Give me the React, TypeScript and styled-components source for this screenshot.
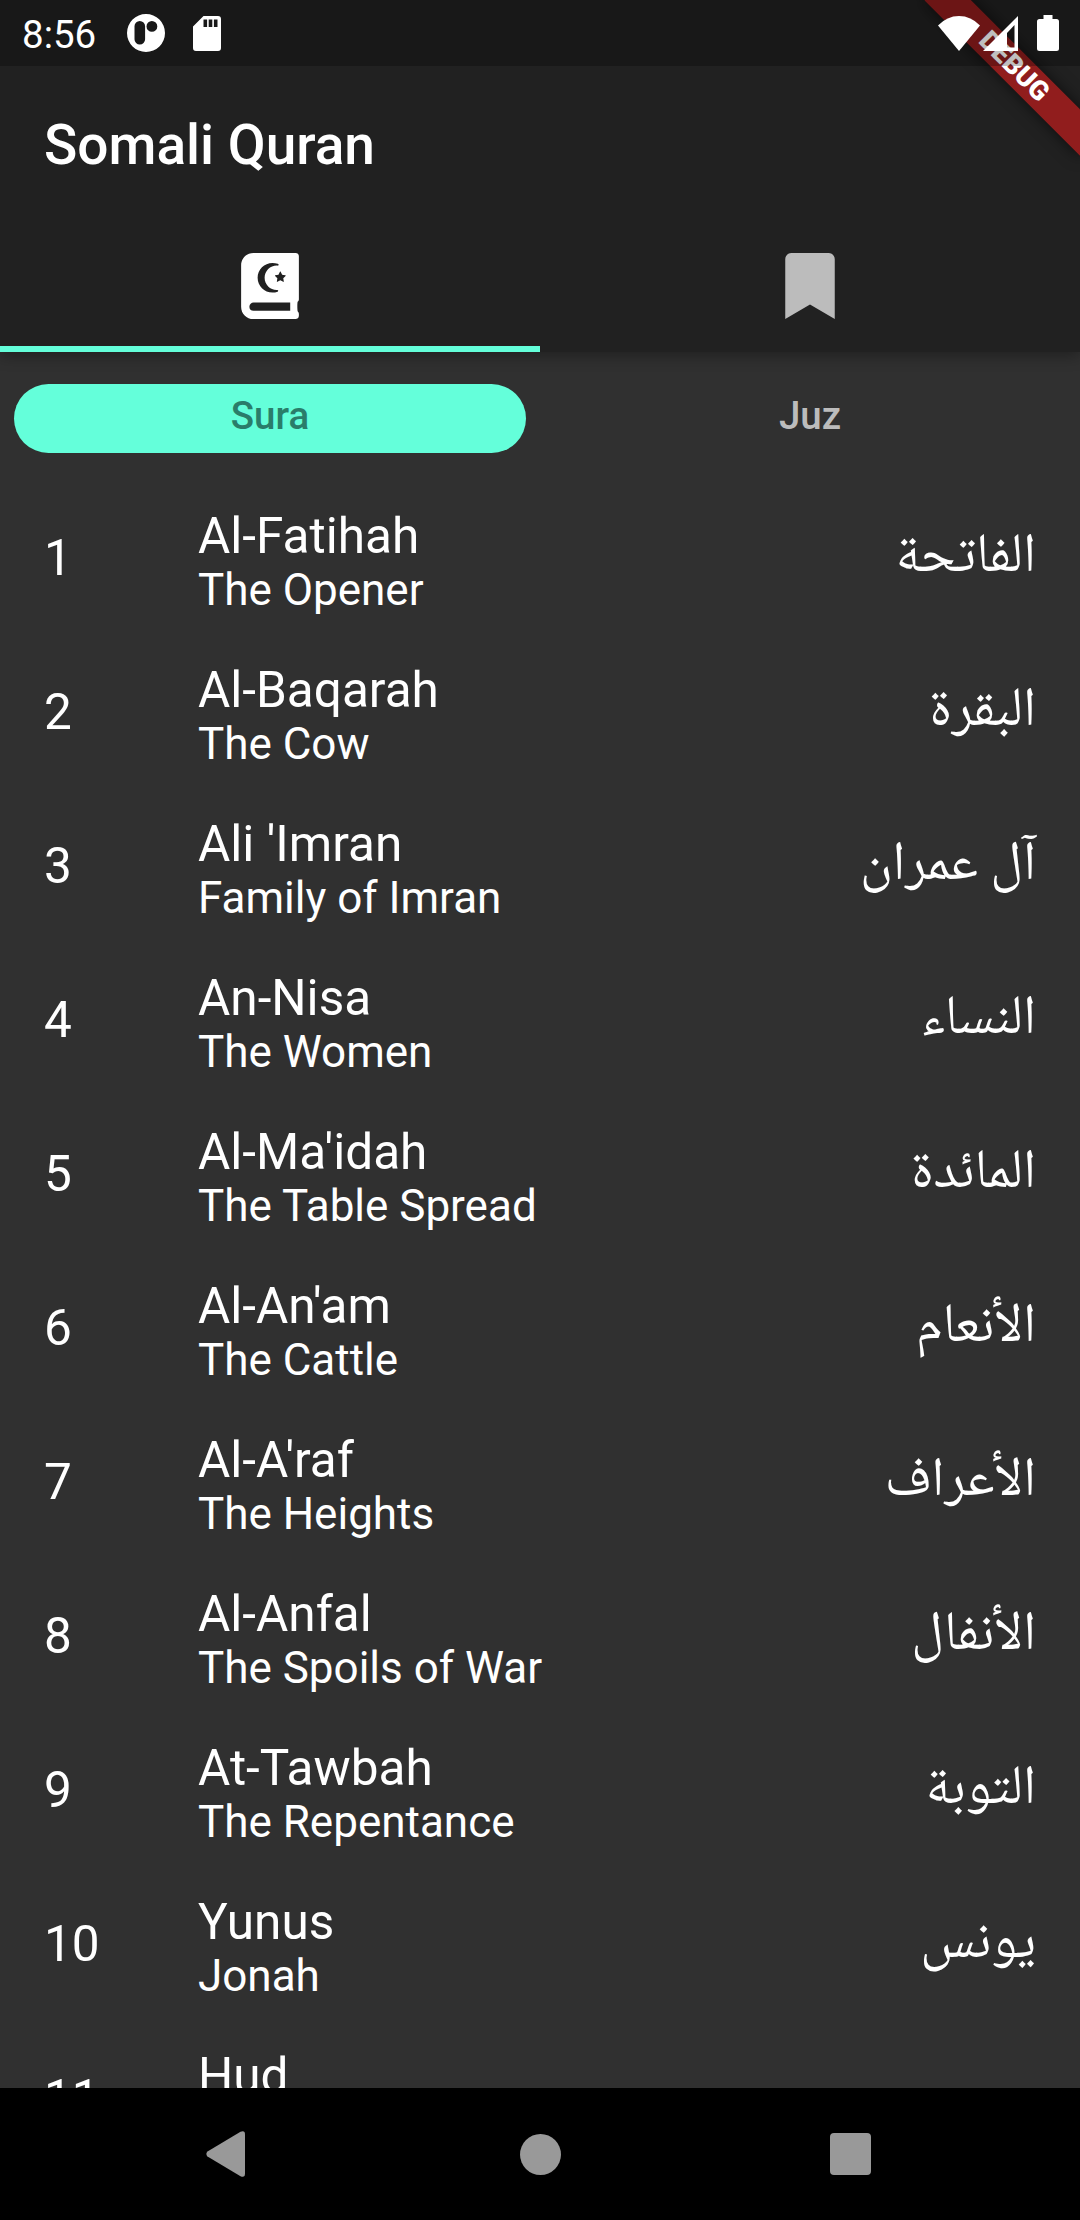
import React from 'react';
import styled, { createGlobalStyle } from 'styled-components';
import { FaBookmark, FaQuran } from 'react-icons/fa';

const GlobalStyle = createGlobalStyle`
  * { box-sizing: border-box; }
  body {
    margin: 0;
    background: #303030;
    color: #fff;
    font-family: Roboto, "Noto Sans", sans-serif;
  }
`;

const Screen = styled.div`
  position: relative;
  display: flex;
  flex-direction: column;
  width: 1080px;
  height: 2220px;
  overflow: hidden;
  background: #303030;
`;

const Header = styled.header`
  flex: none;
  height: 352px;
  display: flex;
  flex-direction: column;
  background: #212121;
  box-shadow: 0 4px 14px rgba(0, 0, 0, 0.32);
`;

const StatusBar = styled.div`
  position: relative;
  z-index: 2;
  flex: none;
  height: 66px;
  padding: 0 21px 0 22px;
  display: flex;
  align-items: center;
  justify-content: space-between;
  background: rgba(0, 0, 0, 0.25);
`;

const StatusGroup = styled.div`
  display: flex;
  align-items: center;
`;

const Clock = styled.span`
  width: 105px;
  font-size: 38.5px;
  line-height: 66px;
  padding-top: 3px;
`;

const Glyph = styled.svg<{ $gap?: number }>`
  display: block;
  flex: none;
  margin-left: ${(p) => p.$gap ?? 0}px;
`;

const DebugBanner = styled.div`
  position: absolute;
  z-index: 1;
  left: 904px;
  top: 49.6px;
  width: 220px;
  height: 33px;
  transform: rotate(45deg);
  background: rgba(183, 28, 28, 0.75);
  box-shadow: 0 0 16px rgba(0, 0, 0, 0.6);
  font-size: 27px;
  font-weight: 900;
  line-height: 33px;
  text-align: center;
`;

const Title = styled.h1`
  flex: none;
  margin: 0;
  height: 154px;
  padding: 0 44px;
  font-size: 55px;
  font-weight: 500;
  line-height: 158px;
`;

const IconTabs = styled.nav`
  flex: 1;
  display: grid;
  grid-template-columns: 1fr 1fr;
`;

const IconTab = styled.div<{ $active?: boolean }>`
  display: flex;
  align-items: center;
  justify-content: center;
  font-size: 66px;
  color: ${(p) => (p.$active ? '#fff' : '#bcbcbc')};
  border-bottom: 6px solid ${(p) => (p.$active ? '#64ffda' : 'transparent')};
  padding-top: 6px;
`;

const PillTabs = styled.nav`
  flex: none;
  height: 128px;
  padding: 31.5px 0 27.5px;
  display: grid;
  grid-template-columns: 1fr 1fr;
`;

const PillTab = styled.div<{ $active?: boolean }>`
  margin: 0 14px;
  height: 69px;
  border-radius: 35px;
  background: ${(p) => (p.$active ? '#64ffda' : 'transparent')};
  color: ${(p) => (p.$active ? '#2a7d6a' : '#bcbcbc')};
  font-size: 38.5px;
  font-weight: 500;
  line-height: 64px;
  text-align: center;
`;

const SuraList = styled.main`
  flex: 1;
  min-height: 0;
  overflow: hidden;
`;

const SuraRow = styled.div`
  height: 154px;
  padding: 0 44px;
  display: grid;
  grid-template-columns: 154px 1fr auto;
  align-items: center;
`;

const SuraNumber = styled.span`
  padding-top: 2px;
  font-size: 49.5px;
  line-height: 58px;
`;

const SuraNames = styled.div`
  display: flex;
  flex-direction: column;
  padding-top: 9px;
`;

const SuraName = styled.span`
  font-size: 49.5px;
  line-height: 58px;
`;

const SuraMeaning = styled.span`
  margin-top: -1px;
  font-size: 44px;
  line-height: 52px;
`;

const ArabicName = styled.span`
  padding-top: 4px;
  font-family: "Noto Naskh Arabic", "Noto Sans Arabic", "DejaVu Sans", sans-serif;
  font-size: 55px;
  line-height: 58px;
`;

const NavigationBar = styled.footer`
  flex: none;
  height: 132px;
  padding: 0 209px 0 206px;
  display: flex;
  align-items: center;
  justify-content: space-between;
  background: #000;
`;

const suras = [
  ['Al-Fatihah', 'The Opener', 'الفاتحة'],
  ['Al-Baqarah', 'The Cow', 'البقرة'],
  ["Ali 'Imran", 'Family of Imran', 'آل عمران'],
  ['An-Nisa', 'The Women', 'النساء'],
  ["Al-Ma'idah", 'The Table Spread', 'المائدة'],
  ["Al-An'am", 'The Cattle', 'الأنعام'],
  ["Al-A'raf", 'The Heights', 'الأعراف'],
  ['Al-Anfal', 'The Spoils of War', 'الأنفال'],
  ['At-Tawbah', 'The Repentance', 'التوبة'],
  ['Yunus', 'Jonah', 'يونس'],
  ['Hud', '', ''],
];

export default function App() {
  return (
    <Screen>
      <GlobalStyle />
      <Header>
        <StatusBar>
          <StatusGroup>
            <Clock>8:56</Clock>
            <Glyph width="38" height="38" viewBox="0 0 38 38">
              <path
                fill="#fff"
                fillRule="evenodd"
                d="M19 0a19 19 0 1 1 0 38a19 19 0 0 1 0-38zM12.800 7A5.300 5.300 0 0 0 7.500 12.300V25.200a5.300 5.300 0 0 0 10.600 0V12.300A5.300 5.300 0 0 0 12.800 7zM24.900 7a5.400 5.400 0 1 0 0 10.800a5.400 5.400 0 0 0 0-10.800z"
              />
            </Glyph>
            <Glyph $gap={28} width="28" height="35" viewBox="0 0 28 35">
              <path
                fill="#fff"
                fillRule="evenodd"
                d="M10.500 0H25a3 3 0 0 1 3 3V32a3 3 0 0 1-3 3H3a3 3 0 0 1-3-3V10.500zM10.500 3.500V11h3.600V3.500zM15.700 3.500V11h3.600V3.500zM20.900 3.500V11h3.600V3.500z"
              />
            </Glyph>
          </StatusGroup>
          <StatusGroup>
            <Glyph width="42" height="35" viewBox="0 0 42 35">
              <path fill="#fff" d="M0 9.500Q9 0 21 0T42 9.500L21 35z" />
            </Glyph>
            <Glyph $gap={3} width="35" height="35" viewBox="0 0 35 35">
              <path fill="#fff" fillRule="evenodd" d="M35 0V35H0zM31.500 9L24 17V31.500H31.500z" />
            </Glyph>
            <Glyph $gap={19} width="22" height="36" viewBox="0 0 22 36">
              <path
                fill="#fff"
                d="M6.500 0H15.500V4H19.500A2.500 2.500 0 0 1 22 6.500V33.500A2.500 2.500 0 0 1 19.500 36H2.500A2.500 2.500 0 0 1 0 33.500V6.500A2.500 2.500 0 0 1 2.500 4H6.500z"
              />
            </Glyph>
          </StatusGroup>
        </StatusBar>
        <Title>Somali Quran</Title>
        <IconTabs>
          <IconTab $active>
            <FaQuran />
          </IconTab>
          <IconTab>
            <FaBookmark />
          </IconTab>
        </IconTabs>
      </Header>
      <DebugBanner>DEBUG</DebugBanner>
      <PillTabs>
        <PillTab $active>Sura</PillTab>
        <PillTab>Juz</PillTab>
      </PillTabs>
      <SuraList>
        {suras.map(([name, meaning, arabic], i) => (
          <SuraRow key={name}>
            <SuraNumber>{i + 1}</SuraNumber>
            <SuraNames>
              <SuraName>{name}</SuraName>
              <SuraMeaning>{meaning || '\u00a0'}</SuraMeaning>
            </SuraNames>
            <ArabicName dir="rtl" lang="ar">
              {arabic}
            </ArabicName>
          </SuraRow>
        ))}
      </SuraList>
      <NavigationBar>
        <Glyph width="39" height="46" viewBox="0 0 39 46">
          <path
            fill="#999"
            d="M1.500 20.500L34.500 .8Q39 -1 39 3.500V42.500Q39 47 34.500 45.200L1.500 25.500Q-.8 23 1.500 20.500z"
          />
        </Glyph>
        <Glyph $gap={5} width="41" height="41" viewBox="0 0 41 41">
          <circle cx="20.500" cy="20.500" r="20.500" fill="#999" />
        </Glyph>
        <Glyph width="41" height="42" viewBox="0 0 41 42">
          <rect width="41" height="42" rx="4" fill="#999" />
        </Glyph>
      </NavigationBar>
    </Screen>
  );
}
